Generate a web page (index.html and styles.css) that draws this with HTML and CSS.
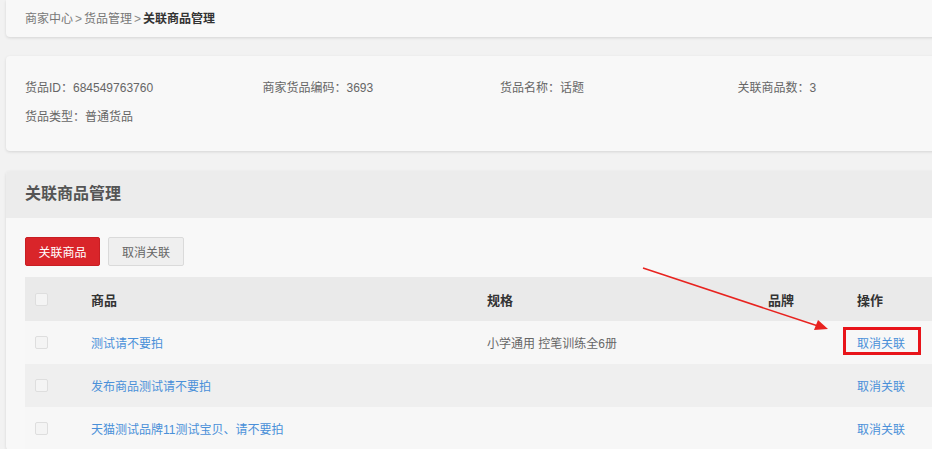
FILE: index.html
```html
<!DOCTYPE html>
<html lang="zh-CN">
<head>
    <meta charset="UTF-8">
    <title>关联商品管理</title>
    <link rel="stylesheet" href="styles.css">
</head>
<body>
<div class="page">
    <!-- breadcrumb -->
    <div class="card crumbs">
        <span>商家中心</span><span class="sep">&gt;</span><span>货品管理</span><span class="sep">&gt;</span><strong>关联商品管理</strong>
    </div>

    <!-- goods info -->
    <div class="card info">
        <div class="info-grid">
            <div>货品ID：684549763760</div>
            <div>商家货品编码：3693</div>
            <div>货品名称：话题</div>
            <div>关联商品数：3</div>
            <div>货品类型：普通货品</div>
        </div>
    </div>

    <!-- related goods -->
    <div class="card section">
        <div class="section-head">关联商品管理</div>
        <div class="section-body">
            <div class="toolbar">
                <button class="btn btn-red">关联商品</button>
                <button class="btn btn-grey">取消关联</button>
            </div>
            <table class="goods">
                <colgroup>
                    <col style="width: 50px">
                    <col style="width: 396px">
                    <col style="width: 281px">
                    <col style="width: 89px">
                    <col style="width: 110px">
                </colgroup>
                <thead>
                    <tr>
                        <th class="chk"><span class="box"></span></th>
                        <th>商品</th>
                        <th>规格</th>
                        <th>品牌</th>
                        <th>操作</th>
                    </tr>
                </thead>
                <tbody>
                    <tr>
                        <td class="chk"><span class="box"></span></td>
                        <td><a href="#">测试请不要拍</a></td>
                        <td>小学通用 控笔训练全6册</td>
                        <td></td>
                        <td><a href="#" class="mark">取消关联</a></td>
                    </tr>
                    <tr>
                        <td class="chk"><span class="box"></span></td>
                        <td><a href="#">发布商品测试请不要拍</a></td>
                        <td></td>
                        <td></td>
                        <td><a href="#">取消关联</a></td>
                    </tr>
                    <tr>
                        <td class="chk"><span class="box"></span></td>
                        <td><a href="#">天猫测试品牌11测试宝贝、请不要拍</a></td>
                        <td></td>
                        <td></td>
                        <td><a href="#">取消关联</a></td>
                    </tr>
                </tbody>
            </table>
        </div>
    </div>

    <!-- annotation arrow -->
    <svg class="arrow" width="932" height="449" viewBox="0 0 932 449">
        <line x1="643" y1="268" x2="818" y2="326" stroke="#e8231f" stroke-width="1.5"/>
        <polygon points="828,329 814,330 818,320" fill="#e8231f"/>
    </svg>
</div>
</body>
</html>
```

FILE: styles.css
```css
html, body {
    margin: 0;
    padding: 0;
    overflow: hidden;
}
body {
    background: #f2f2f2;
    font-family: "Liberation Sans", Arial, "Noto Sans CJK SC", sans-serif;
    font-size: 12px;
    color: #666;
}
.page {
    position: relative;
    width: 932px;
    height: 449px;
    padding-left: 6px;
    box-sizing: border-box;
    overflow: hidden;
}
.card {
    background: #f8f8f8;
    border-radius: 4px;
    box-shadow: 0 1px 3px rgba(0, 0, 0, 0.12);
    margin-right: -30px;
}
.crumbs {
    height: 37px;
    line-height: 38px;
    padding-left: 19px;
    color: #777;
    border-top-left-radius: 0;
}
.crumbs strong {
    color: #333;
}
.sep {
    margin: 0 2px;
    color: #888;
}
.info {
    margin-top: 19px;
    height: 95px;
    padding: 18px 0 0 19px;
    box-sizing: border-box;
}
.info-grid {
    display: grid;
    grid-template-columns: repeat(4, 237.5px);
    grid-auto-rows: 29px;
    line-height: 29px;
}
.section {
    margin-top: 20px;
    overflow: hidden;
}
.section-head {
    background: #ececec;
    height: 47px;
    line-height: 46px;
    padding-left: 19px;
    font-size: 16px;
    font-weight: bold;
    color: #555;
}
.section-body {
    padding: 19px 0 0 19px;
}
.toolbar {
    display: flex;
    gap: 8px;
    height: 29px;
}
.btn {
    font-family: inherit;
    font-size: 12px;
    height: 29px;
    border-radius: 2px;
    padding: 0;
}
.btn-red {
    width: 75px;
    background: #d9252a;
    border: 1px solid #c81e23;
    color: #fff;
}
.btn-grey {
    width: 76px;
    background: #efefef;
    border: 1px solid #dadada;
    color: #666;
}
.goods {
    margin-top: 11px;
    border-collapse: collapse;
    table-layout: fixed;
    width: 926px;
}
.goods th {
    background: #eaeaea;
    height: 44px;
    text-align: left;
    padding: 0 0 0 16px;
    font-size: 13px;
    color: #333;
}
.goods td {
    height: 43px;
    padding: 0 0 0 16px;
    color: #666;
}
.goods tbody tr:nth-child(odd) td {
    background: #f7f7f7;
}
.goods tbody tr:nth-child(even) td {
    background: #efefef;
}
.goods th.chk, .goods td.chk {
    padding-left: 10px;
}
.box {
    display: block;
    width: 11px;
    height: 11px;
    border: 1px solid #dedede;
    border-radius: 2px;
    background: #f4f4f4;
}
.goods a {
    color: #4a90d9;
    text-decoration: none;
}
.mark {
    position: relative;
}
.mark::after {
    content: "";
    position: absolute;
    left: -14px;
    top: -10px;
    width: 72px;
    height: 22px;
    border: 3px solid #e8141a;
}
.arrow {
    position: absolute;
    left: 0;
    top: 0;
    pointer-events: none;
}
```
